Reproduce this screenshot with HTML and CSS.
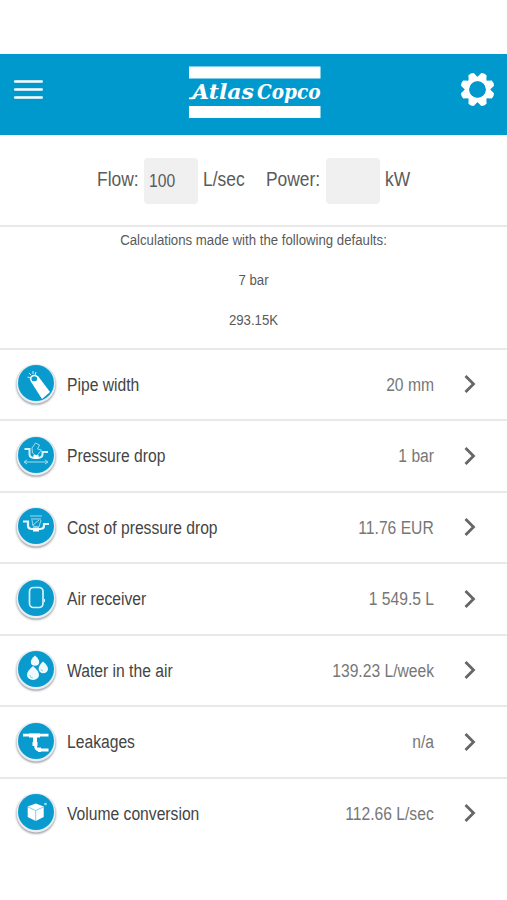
FILE: index.html
```html
<!DOCTYPE html>
<html lang="en">
<head>
<meta charset="utf-8">
<title>Atlas Copco</title>
<link rel="stylesheet" href="styles.css">
</head>
<body>
<header class="bar">
  <svg class="menu" viewBox="0 0 30 22"><path d="M2.200 2.500h26.500M2.200 10.500h26.500M2.200 18.500h26.500" stroke="#fff" stroke-width="2.600" stroke-linecap="round"/></svg>
  <svg class="logo" viewBox="0 0 134 54">
    <path d="M1 1.500h131.500v12H1zM1 41h131.500v12H1z" fill="#fff"/>
    <text class="brand" x="4" y="33.500" textLength="62" lengthAdjust="spacingAndGlyphs">Atlas</text>
    <text class="brand" x="69" y="33.500" textLength="63.500" lengthAdjust="spacingAndGlyphs">Copco</text>
    <path d="M1 33.200q5 1.200 8-4" fill="none" stroke="#fff" stroke-width="1.800"/>
  </svg>
  <svg class="gear" viewBox="-17.500 -17.500 35 35">
    <g fill="#fff" transform="rotate(22.500)">
      <path id="tooth" d="M-5-11L-2.900-16.700Q0-17.900 2.900-16.700L5-11z"/>
      <use href="#tooth" transform="rotate(45)"/><use href="#tooth" transform="rotate(90)"/><use href="#tooth" transform="rotate(135)"/><use href="#tooth" transform="rotate(180)"/><use href="#tooth" transform="rotate(225)"/><use href="#tooth" transform="rotate(270)"/><use href="#tooth" transform="rotate(315)"/>
    </g>
    <circle r="10.400" fill="none" stroke="#fff" stroke-width="4.600"/>
    <circle r="8.300" fill="#0099ce"/>
  </svg>
</header>
<section class="inputs">
  <span class="cell flow"><span class="sq">Flow:</span></span>
  <span class="field"><span class="sq">100</span></span>
  <span class="cell unit"><span class="sq">L/sec</span></span>
  <span class="cell power"><span class="sq">Power:</span></span>
  <span class="field"></span>
  <span class="cell kw"><span class="sq">kW</span></span>
</section>
<section class="defaults">
  <p>Calculations made with the following defaults:</p>
  <p>7 bar</p>
  <p>293.15K</p>
</section>
<main>
  <div class="row">
    <svg class="icon" viewBox="0 0 36 36"><path d="M12.500 16l7.500-5 12 16-8 7z" fill="#fff"/><ellipse cx="16.300" cy="13.700" rx="3.600" ry="3.300" fill="#0a9bce" stroke="#fff" stroke-width="1.500"/><path d="M11 8l2 2M15 6v3M9.500 12l3 1M18 7l-1 3" stroke="#d5f1fa" stroke-width="1"/></svg>
    <span class="name">Pipe width</span><span class="value">20 mm</span>
    <svg class="chevron" viewBox="0 0 14 20"><path d="M2.500 2l8 8-8 8"/></svg>
  </div>
  <div class="row">
    <svg class="icon" viewBox="0 0 36 36"><path d="M6.500 12h5v5.500q0 3.500 6.500 3.500t6.500-3.500V15H30" fill="none" stroke="#d8f3fb" stroke-width="2"/><path d="M14 11l3.500-5 4 2-2 4 4 1-5 6-4-3z" fill="none" stroke="#9ddcf0"/><path d="M15.500 18h5v4h-5z" fill="#fff"/><path d="M6 25h24M9 23l-3 2 3 2M27 23l3 2-3 2" fill="none" stroke="#9ddcf0"/></svg>
    <span class="name">Pressure drop</span><span class="value">1 bar</span>
    <svg class="chevron" viewBox="0 0 14 20"><path d="M2.500 2l8 8-8 8"/></svg>
  </div>
  <div class="row">
    <svg class="icon" viewBox="0 0 36 36"><path d="M5 13.500h5v4q0 3.500 4 3.500h8q4 0 4-3.500V16h5" fill="none" stroke="#e6f8fd" stroke-width="2.200"/><path d="M12 8h12M13 11h10M15 17l6-5M14 12l1 6 6 1 2-7" fill="none" stroke="#9ddcf0"/><path d="M15 19.500h6v4h-6z" fill="#fff"/></svg>
    <span class="name">Cost of pressure drop</span><span class="value">11.76 EUR</span>
    <svg class="chevron" viewBox="0 0 14 20"><path d="M2.500 2l8 8-8 8"/></svg>
  </div>
  <div class="row">
    <svg class="icon" viewBox="0 0 36 36"><rect x="11.500" y="7.500" width="13.500" height="20" rx="4" fill="none" stroke="#d8f3fb" stroke-width="1.700"/><path d="M26.500 19v3" stroke="#d8f3fb"/></svg>
    <span class="name">Air receiver</span><span class="value">1 549.5 L</span>
    <svg class="chevron" viewBox="0 0 14 20"><path d="M2.500 2l8 8-8 8"/></svg>
  </div>
  <div class="row">
    <svg class="icon" viewBox="0 0 36 36"><g fill="#eefaff"><path d="M15 15q6 5 6 9a6 5 0 0 1-12 0q0-4 6-9z"/><path d="M17 4.500q4.200 3.500 4.200 6.500a4.200 3.800 0 0 1-8.400 0q0-3 4.200-6.500z"/><path d="M25 10.500q5 4 5 7.500a4.700 4.200 0 0 1-9.400 0q0-3.500 4.400-7.500z"/></g><path d="M12 24q0 3 3 3M23 18q0 2 2 2" fill="none" stroke="#8cd5ed"/></svg>
    <span class="name">Water in the air</span><span class="value">139.23 L/week</span>
    <svg class="chevron" viewBox="0 0 14 20"><path d="M2.500 2l8 8-8 8"/></svg>
  </div>
  <div class="row">
    <svg class="icon" viewBox="0 0 36 36"><path d="M5 12.200h25.500M17.500 12v10q0 5 4 5h9" fill="none" stroke="#fff" stroke-width="2.800"/><path d="M11 10.500h11v4h-3v5h-4v-5h-4zM14.500 19h5v4h-5zM20 24.500h3V29h-3z" fill="#fff"/></svg>
    <span class="name">Leakages</span><span class="value">n/a</span>
    <svg class="chevron" viewBox="0 0 14 20"><path d="M2.500 2l8 8-8 8"/></svg>
  </div>
  <div class="row">
    <svg class="icon" viewBox="0 0 36 36"><path d="M17.700 9.500l8 3V23l-8 4-8-4V12.500z" fill="#fff"/><path d="M10 13l7.700 3.500 7.700-3.500M17.700 16.500V27" fill="none" stroke="#7bcfe9"/><circle cx="27.500" cy="10" r="1.300" fill="#a8e0f2"/></svg>
    <span class="name">Volume conversion</span><span class="value">112.66 L/sec</span>
    <svg class="chevron" viewBox="0 0 14 20"><path d="M2.500 2l8 8-8 8"/></svg>
  </div>
</main>
</body>
</html>
```
FILE: styles.css
```css
* { box-sizing: border-box; }
body {
  margin: 0;
  padding-top: 54px;
  background: #fff;
  color: #5a5a5a;
  font-family: "Liberation Sans", Arial, sans-serif;
}
.bar {
  height: 81px;
  display: grid;
  grid-template-columns: 1fr 134px 1fr;
  padding: 0 12px 0 12.500px;
  background: #0099ce;
}
.menu { width: 30px; height: 22px; margin-top: 25px; }
.logo { width: 134px; height: 54px; margin: 11px 0 0 1px; overflow: visible; }
.brand { font: italic bold 20px "DejaVu Serif", serif; fill: #fff; }
.gear { width: 35px; height: 35px; margin-top: 18px; justify-self: end; }

.inputs {
  height: 92px;
  display: flex;
  padding: 23px 0 0 96.500px;
  border-bottom: 2px solid #e9e9e9;
  font-size: 20px;
  line-height: 42px;
}
.sq { display: inline-block; transform: scaleX(.87); transform-origin: left; white-space: nowrap; }
.cell { flex: none; }
.flow { width: 47.500px; }
.unit { width: 63px; padding-left: 5px; margin-right: 5px; }
.power { width: 60px; }
.kw { width: 40px; padding-left: 5px; }
.field {
  flex: none;
  width: 54px;
  height: 46px;
  padding-left: 5px;
  border-radius: 4px;
  background: #f0f0f0;
  font-size: 18px;
  line-height: 47px;
}

.defaults {
  height: 122.500px;
  border-bottom: 2px solid #e9e9e9;
  padding-top: 3px;
  font-size: 15.200px;
  line-height: 20px;
  text-align: center;
}
.defaults p { margin: 0 0 20px; transform: scaleX(.87); }

.row {
  height: 71.500px;
  display: flex;
  align-items: center;
  padding: 1px 30px 0 18px;
  border-bottom: 2px solid #e9e9e9;
  font-size: 18px;
  line-height: 24px;
}
.row:last-child { border-bottom-color: transparent; }
.icon {
  flex: none;
  width: 36px;
  height: 36px;
  margin-top: -3px;
  border-radius: 50%;
  background: #0a9bce;
  box-shadow: 0 1px 0 1.500px #e9eef3, 0 2px 2px 2px #aaa9af;
}
.name { margin-left: 13px; color: #444; transform: scaleX(.87); transform-origin: left; white-space: nowrap; }
.value { margin-left: auto; color: #777; transform: scaleX(.87); transform-origin: right; white-space: nowrap; }
.chevron { flex: none; width: 14px; height: 20px; margin: -1px 0 0 29px; }
.chevron path { fill: none; stroke: #666; stroke-width: 2.800; }
```
